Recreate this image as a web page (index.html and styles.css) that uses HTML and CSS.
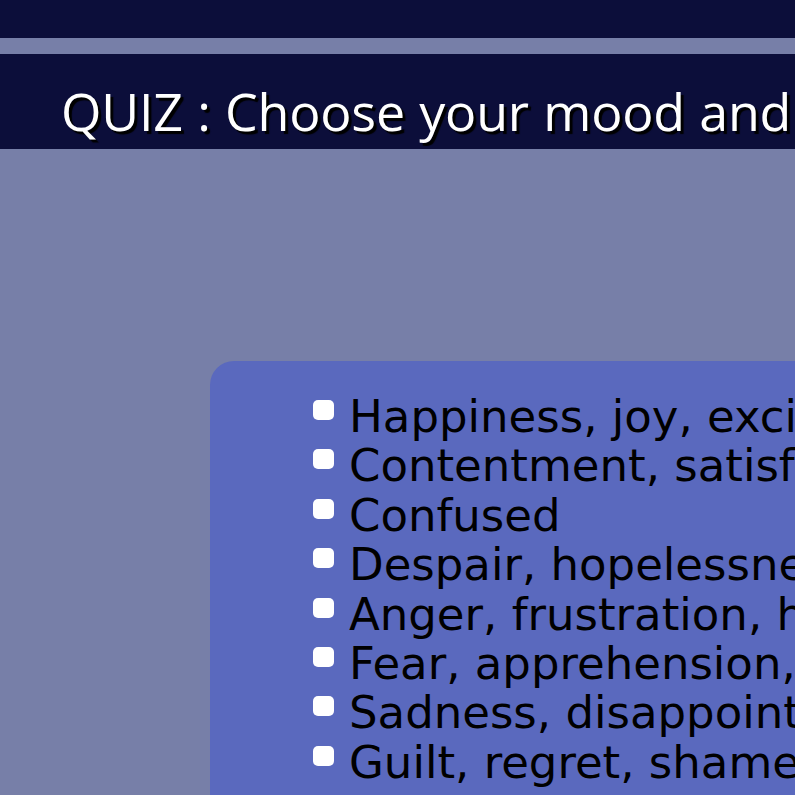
FILE: index.html
```html
<!DOCTYPE html>
<html lang="en">
<head>
<meta charset="utf-8">
<title>Mood Quiz</title>
<link rel="stylesheet" href="styles.css">
</head>
<body>
<div class="topbar"></div>
<header class="header">
  <h1 class="title">QUIZ : Choose your mood and find your song</h1>
</header>
<main class="content">
  <form class="card">
    <label class="option"><input type="checkbox" class="box"><span>Happiness, joy, excitement</span></label>
    <label class="option"><input type="checkbox" class="box"><span>Contentment, satisfaction, peace</span></label>
    <label class="option"><input type="checkbox" class="box"><span>Confused</span></label>
    <label class="option"><input type="checkbox" class="box"><span>Despair, hopelessness</span></label>
    <label class="option"><input type="checkbox" class="box"><span>Anger, frustration, hostility</span></label>
    <label class="option"><input type="checkbox" class="box"><span>Fear, apprehension, anxiety</span></label>
    <label class="option"><input type="checkbox" class="box"><span>Sadness, disappointment, grief</span></label>
    <label class="option"><input type="checkbox" class="box"><span>Guilt, regret, shame</span></label>
  </form>
</main>
</body>
</html>
```
FILE: styles.css
```css
html, body {
  margin: 0;
  padding: 0;
  overflow: hidden;
  background: #777fa8;
}
body {
  width: 795px;
  height: 795px;
}
.topbar {
  height: 38px;
  background: #0c0e3a;
}
.header {
  margin-top: 16px;
  height: 95px;
  background: #0c0e3a;
  box-sizing: border-box;
  padding: 31px 0 0 61px;
  white-space: nowrap;
  overflow: hidden;
}
.title {
  margin: 0;
  font-family: "Open Sans", sans-serif;
  font-weight: 400;
  font-size: 52px;
  line-height: 52px;
  letter-spacing: -0.2px;
  word-spacing: 1px;
  color: #ffffff;
  text-shadow: 3px 3px 1px #000000;
}
.content {
  padding: 212px 0 0 210px;
}
.card {
  width: 900px;
  height: 600px;
  background: #5a69be;
  border-radius: 24px;
  padding: 31px 0 0 103px;
  display: flex;
  flex-direction: column;
  font-family: "DejaVu Sans", sans-serif;
  font-size: 45px;
  line-height: 49.4px;
  color: #000;
  white-space: nowrap;
}
.option {
  display: flex;
  align-items: flex-start;
  gap: 15px;
}
.box {
  appearance: none;
  -webkit-appearance: none;
  margin: 8px 0 0 0;
  width: 21px;
  height: 20px;
  background: #ffffff;
  border: none;
  border-radius: 5px;
  flex: none;
}
```
